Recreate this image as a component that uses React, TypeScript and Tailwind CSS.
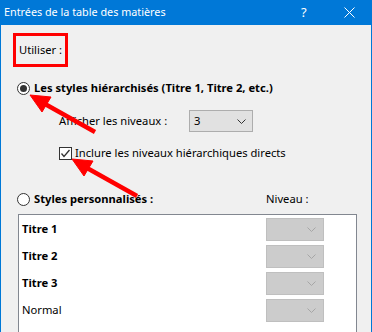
import { ReactNode } from 'react'

function Chevron({ color }: { color: string }) {
  return (
    <svg width="9" height="5" viewBox="0 0 9 5" className="shrink-0">
      <polyline points="0.5,0.5 4.5,4.5 8.5,0.5" fill="none" stroke={color} strokeWidth="1" />
    </svg>
  )
}

function Radio({ checked }: { checked?: boolean }) {
  return (
    <div className="w-[13px] h-[13px] rounded-full border border-[#333333] bg-white flex items-center justify-center shrink-0">
      {checked && <div className="w-[7px] h-[7px] rounded-full bg-[#333333]" />}
    </div>
  )
}

function DisabledCombo() {
  return (
    <div className="w-[58px] h-[23px] bg-[#cccccc] border border-[#bfbfbf] flex items-center justify-end pr-[7px]">
      <Chevron color="#a6a6a6" />
    </div>
  )
}

function LevelRow({ label, bold, children }: { label: string; bold?: boolean; children?: ReactNode }) {
  return (
    <div className="flex items-center h-[23px]">
      <span className={`w-[247px] pl-[3px] ${bold ? 'font-bold' : ''}`}>{label}</span>
      {children ?? <DisabledCombo />}
    </div>
  )
}

export default function App() {
  return (
    <div
      className="relative w-[372px] h-[332px] overflow-hidden bg-[#f0f0f0] border-x border-[#0078d7] text-[11.2px] text-black"
      style={{ fontFamily: '"Segoe UI", "Noto Sans", sans-serif' }}
    >
      <div className="h-[25px] bg-[#0078d7] text-white flex items-center pl-[3px] text-[10.8px]">
        <span className="flex-1">Entrées de la table des matières</span>
        <span className="w-[10px] mr-[33px] text-[13px]">?</span>
        <svg width="11" height="11" viewBox="0 0 11 11" className="mr-[16px]">
          <line x1="0.5" y1="0.5" x2="10.5" y2="10.5" stroke="white" strokeWidth="1" />
          <line x1="10.5" y1="0.5" x2="0.5" y2="10.5" stroke="white" strokeWidth="1" />
        </svg>
      </div>

      <div className="flex flex-col">
        <div className="ml-[12px] mt-[8px] w-[55px] h-[34px] border-[3px] border-[#ff0000] flex items-center pl-[3px]">
          Utiliser :
        </div>

        <div className="ml-[16px] mt-[12px] h-[19px] flex items-center gap-[4px]">
          <Radio checked />
          <span className="font-bold">Les styles hiérarchisés (Titre 1, Titre 2, etc.)</span>
        </div>

        <div className="ml-[58px] mt-[12px] h-[22px] flex items-center">
          <span className="w-[130px]">Afficher les niveaux :</span>
          <div className="w-[64px] h-[22px] bg-[#e1e1e1] border border-[#adadad] flex items-center justify-between pl-[4px] pr-[6px]">
            <span>3</span>
            <Chevron color="#333333" />
          </div>
        </div>

        <div className="ml-[58px] mt-[12px] h-[19px] flex items-center gap-[3px]">
          <div className="w-[13px] h-[13px] border border-[#333333] bg-white flex items-center justify-center shrink-0">
            <svg width="11" height="11" viewBox="0 0 11 11">
              <polyline points="1.5,5.5 4,8.5 9.5,2" fill="none" stroke="#333333" strokeWidth="1.3" />
            </svg>
          </div>
          <span>Inclure les niveaux hiérarchiques directs</span>
        </div>

        <div className="ml-[16px] mt-[27px] h-[19px] flex items-center">
          <Radio />
          <span className="font-bold ml-[4px] w-[232px]">Styles personnalisés :</span>
          <span>Niveau :</span>
        </div>

        <div className="ml-[17px] mt-[5px] w-[339px] h-[130px] bg-white border border-[#828790] pt-[3px] flex flex-col gap-[4px]">
          <LevelRow label="Titre 1" bold />
          <LevelRow label="Titre 2" bold />
          <LevelRow label="Titre 3" bold />
          <LevelRow label="Normal" />
        </div>
      </div>

      <svg className="absolute inset-0 pointer-events-none" width="372" height="332">
        <g fill="#ff0000" stroke="#ff0000">
          <line x1="44" y1="104" x2="94" y2="132" strokeWidth="4.5" />
          <polygon points="29,95 41,112 50,97" strokeWidth="1" />
          <line x1="86" y1="168" x2="136" y2="196" strokeWidth="4.5" />
          <polygon points="71,159 83,176 92,161" strokeWidth="1" />
        </g>
      </svg>
    </div>
  )
}
